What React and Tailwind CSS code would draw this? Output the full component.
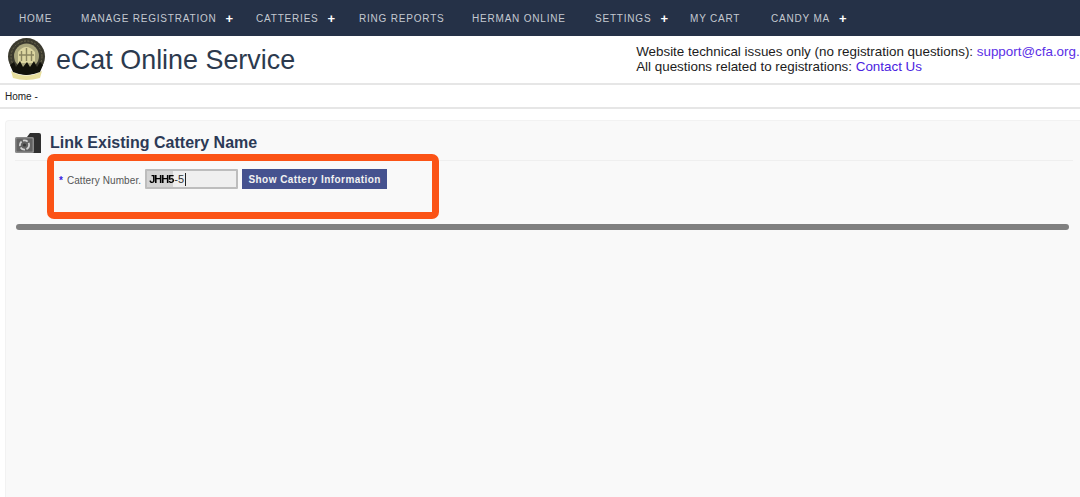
import React from 'react';

const navItems = [
  { label: 'HOME', width: 'w-[62px]' },
  { label: 'MANAGE REGISTRATION', plus: true, width: 'w-[175px]' },
  { label: 'CATTERIES', plus: true, width: 'w-[103px]' },
  { label: 'RING REPORTS', width: 'w-[113px]' },
  { label: 'HERMAN ONLINE', width: 'w-[123px]' },
  { label: 'SETTINGS', plus: true, width: 'w-[95px]' },
  { label: 'MY CART', width: 'w-[81px]' },
  { label: 'CANDY MA', plus: true, width: 'w-[100px]' },
];

function Logo() {
  return (
    <svg width="39" height="43" viewBox="0 0 39 43" className="shrink-0">
      <path d="M4 33 Q19 42 35 33 L33 40 Q19 44 6 40 Z" fill="#e8df9e" />
      <circle cx="19.5" cy="18.5" r="18.5" fill="#3b3a2e" />
      <circle cx="19.5" cy="18.5" r="15.5" fill="none" stroke="#6d6a50" strokeWidth="1" strokeDasharray="2 1.5" />
      <circle cx="19.5" cy="18" r="12.5" fill="#a9a67c" />
      <path d="M11 14 Q19 4 28 14 L28 25 L11 25 Z" fill="#dcd6a0" />
      <path d="M14.5 23 V13 M19.5 23 V10 M24.5 23 V13 M12 17 H27" stroke="#8a8660" strokeWidth="1.4" fill="none" />
      <path d="M3 27 L7 24 L9 29 L13 23 L16 29 L20 24 L23 29 L27 23 L30 29 L33 24 L36 27 L33 34 Q19 40 6 34 Z" fill="#12120b" />
    </svg>
  );
}

function SafeIcon() {
  return (
    <svg width="27" height="20" viewBox="0 0 27 20" className="shrink-0">
      <path d="M12 4 L15 0 H24 Q26 0 26 2 V20 H12 Z" fill="#2f2f2f" />
      <rect x="0" y="4" width="19" height="16" rx="1.5" fill="#8b8b8b" />
      <rect x="1.5" y="5.5" width="16" height="13" rx="1" fill="#626262" />
      <circle cx="9.5" cy="12" r="4.6" fill="none" stroke="#d2d2d2" strokeWidth="1.8" strokeDasharray="5 1.5" />
      <circle cx="9.5" cy="12" r="1.6" fill="#3a3a3a" />
    </svg>
  );
}

export default function App() {
  return (
    <div className="relative h-[497px] w-[1080px] overflow-hidden bg-white font-['Liberation_Sans',Arial,sans-serif]">
      {/* Nav */}
      <nav className="flex h-9 items-center bg-[#253147] pl-[19px] text-[10px] tracking-[0.8px] text-[#c4c9d1]">
        {navItems.map((item) => (
          <div key={item.label} className={`flex shrink-0 items-center ${item.width}`}>
            <span>{item.label}</span>
            {item.plus && <span className="ml-[9px] text-[13px] leading-none font-bold text-white">+</span>}
          </div>
        ))}
      </nav>

      {/* Header */}
      <header className="flex h-[49px] items-center border-b-2 border-[#e6e6e6] pl-[7px]">
        <Logo />
        <h1 className="mt-[1px] ml-[10px] text-[26.9px] leading-none whitespace-nowrap text-[#2c3a4e]">eCat Online Service</h1>
        <div className="ml-[341px] shrink-0 pb-[1px] text-[13.4px] leading-[15px] whitespace-nowrap text-[#1c1c1c]">
          <div>
            Website technical issues only (no registration questions): <a className="text-[#5a2ee6]">support@cfa.org.</a>
          </div>
          <div>
            All questions related to registrations: <a className="text-[#4a22e0]">Contact Us</a>
          </div>
        </div>
      </header>

      {/* Breadcrumb */}
      <div className="flex h-[24px] items-center border-b-2 border-[#e6e6e6] pl-[5px] text-[10px] text-[#222222]">Home -</div>

      {/* Panel */}
      <main className="mt-[11px] ml-[5px] h-[400px] rounded-tl-[4px] border-t border-l border-[#f2f2f2] bg-[#f9f9f9] pt-[12px]">
        <div className="ml-[9px] flex h-[28px] w-[1058px] items-start gap-[8px] border-b border-[#efefef] pb-[6px]">
          <SafeIcon />
          <h2 className="text-[16px] leading-[20px] font-bold text-[#2c3a56]">Link Existing Cattery Name</h2>
        </div>

        <div className="ml-[53px] flex h-[44px] items-start pt-[8px]">
          <label className="mt-[4px] text-[10px] tracking-[0.1px] text-[#555555]">
            <span className="mr-[1px] font-bold text-[#3a22e0]">*</span> Cattery Number.
          </label>
          <div className="relative ml-[4px] flex h-[20px] w-[93px] items-center rounded-[1px] border-2 border-[#bdbdbd] bg-[#efefef] text-[11px] text-[#333333]">
            <span className="flex h-full items-center bg-[#d4d4d4] pl-[2px] font-bold tracking-[-1px] text-[#000000] blur-[0.5px]">JHH5</span>
            <span className="pl-[1px]">-5</span>
            <span className="ml-[1px] h-[13px] w-px bg-[#222222]" />
          </div>
          <button className="ml-[4px] h-[20px] w-[145px] bg-[#45528f] text-[10px] font-bold tracking-[0.45px] text-[#f2f2f2]">
            Show Cattery Information
          </button>
        </div>

        <div className="mt-[19px] ml-[10px] h-[6px] w-[1053px] rounded-full bg-[#808080]" />
      </main>

      {/* Annotation */}
      <div className="absolute top-[154px] left-[47px] h-[65px] w-[392px] rounded-[7px] border-[7px] border-[#fb5316]" />
    </div>
  );
}
